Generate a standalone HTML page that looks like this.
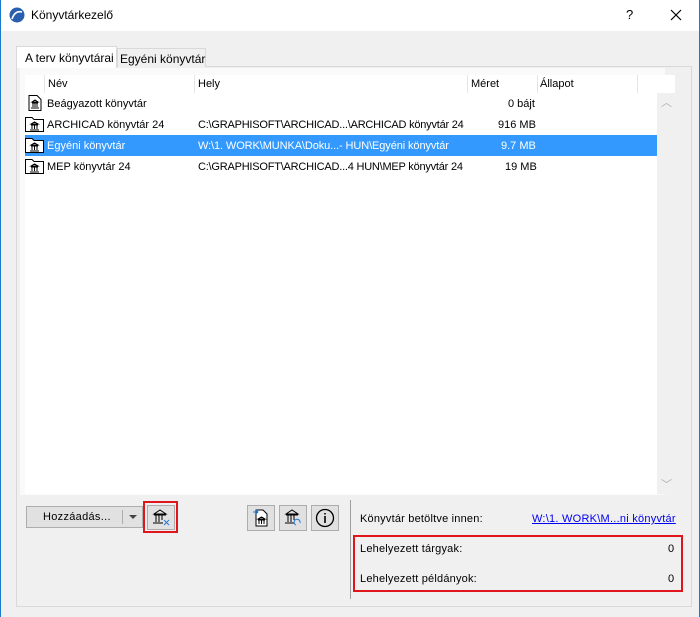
<!DOCTYPE html>
<html><head><meta charset="utf-8"><style>
*{margin:0;padding:0;box-sizing:border-box}
body{width:700px;height:617px;background:#f0f0f0;font-family:"Liberation Sans",sans-serif;font-size:11px;color:#000;position:relative;overflow:hidden}
.a{position:absolute}
.t{position:absolute;white-space:nowrap;line-height:14px}
.btn{position:absolute;background:#e1e1e1;border:1px solid #adadad}
</style></head><body>
<div class="a" style="left:0;top:0;width:700px;height:31px;background:#fff"></div>
<div class="a" style="left:0;top:0;width:1px;height:617px;background:#1979ca"></div>
<div class="a" style="left:699px;top:0;width:1px;height:617px;background:#1979ca"></div>
<svg class="a" style="left:9px;top:7px" width="16" height="16"><circle cx="8" cy="8" r="7.5" fill="#2a5fb0"/><path d="M3 12 Q6 3 13 5" stroke="#fff" stroke-width="1.6" fill="none"/></svg>
<div class="t" style="left:31px;top:8px;font-size:12px">Könyvtárkezelő</div>
<div class="t" style="left:626px;top:8px;font-size:13px">?</div>
<svg class="a" style="left:670px;top:9px" width="12" height="12"><path d="M1 1L11 11M11 1L1 11" stroke="#000" stroke-width="1.2"/></svg>
<div class="a" style="left:16px;top:66px;width:676px;height:541px;border:1px solid #d9d9d9;background:#f0f0f0"></div>
<div class="a" style="left:20px;top:68px;width:645px;height:427px;background:#fafafa"></div>
<div class="a" style="left:16px;top:46px;width:101px;height:22px;background:#fff;border:1px solid #d9d9d9;border-bottom:none"></div>
<div class="t" style="left:25px;top:51px;font-size:12px">A terv könyvtárai</div>
<div class="a" style="left:117px;top:48px;width:89px;height:19px;background:#f0f0f0;border:1px solid #d9d9d9;border-bottom:none"></div>
<div class="t" style="left:120px;top:52px;font-size:12px">Egyéni könyvtár</div>
<div class="a" style="left:25px;top:75px;width:650px;height:419px;background:#fff"></div>
<div class="a" style="left:657px;top:93px;width:18px;height:401px;background:#f0f0f0"></div>
<div class="t" style="left:661px;top:96px;color:#b0b0b0">︿</div>
<div class="t" style="left:661px;top:478px;color:#b0b0b0">﹀</div>
<div class="a" style="left:44px;top:75px;width:1px;height:18px;background:#e5e5e5"></div>
<div class="a" style="left:194px;top:75px;width:1px;height:18px;background:#e5e5e5"></div>
<div class="a" style="left:467px;top:75px;width:1px;height:18px;background:#e5e5e5"></div>
<div class="a" style="left:537px;top:75px;width:1px;height:18px;background:#e5e5e5"></div>
<div class="a" style="left:637px;top:75px;width:1px;height:18px;background:#e5e5e5"></div>
<div class="t" style="left:48px;top:77px">Név</div>
<div class="t" style="left:198px;top:77px">Hely</div>
<div class="t" style="left:471px;top:77px">Méret</div>
<div class="t" style="left:540px;top:77px">Állapot</div>
<div class="a" style="left:25px;top:135px;width:632px;height:21px;background:#3399ff"></div>
<svg class="a" style="left:27px;top:95px" width="16" height="16"><path d="M2 .5H10L14 4.5V15.5H2Z" fill="#fff" stroke="#000"/><path d="M5 7L8 5L11 7ZM5 8H11M6 8V12M8 8V12M10 8V12M4 13H12" stroke="#000" fill="none"/></svg>
<svg class="a" style="left:25px;top:117px" width="19" height="15"><path d="M.5 .5H7L9 2.5H18.5V14.5H.5Z" fill="#fff" stroke="#000"/><path d="M6 7L9.5 5L13 7ZM6 8H13M7 8V12M9.5 8V12M12 8V12M5 13H14" stroke="#000" fill="none"/></svg>
<svg class="a" style="left:25px;top:138px" width="19" height="15"><path d="M.5 .5H7L9 2.5H18.5V14.5H.5Z" fill="#fff" stroke="#000"/><path d="M6 7L9.5 5L13 7ZM6 8H13M7 8V12M9.5 8V12M12 8V12M5 13H14" stroke="#000" fill="none"/></svg>
<svg class="a" style="left:25px;top:159px" width="19" height="15"><path d="M.5 .5H7L9 2.5H18.5V14.5H.5Z" fill="#fff" stroke="#000"/><path d="M6 7L9.5 5L13 7ZM6 8H13M7 8V12M9.5 8V12M12 8V12M5 13H14" stroke="#000" fill="none"/></svg>
<div class="t" style="left:47px;top:97px">Beágyazott könyvtár</div>
<div class="t" style="left:508px;top:97px">0 bájt</div>
<div class="t" style="left:47px;top:118px">ARCHICAD könyvtár 24</div>
<div class="t" style="left:198px;top:118px;letter-spacing:-0.22px">C:\GRAPHISOFT\ARCHICAD...\ARCHICAD könyvtár 24</div>
<div class="t" style="left:498px;top:118px">916 MB</div>
<div class="t" style="left:47px;top:139px;color:#fff">Egyéni könyvtár</div>
<div class="t" style="left:198px;top:139px;color:#fff;letter-spacing:-0.1px">W:\1. WORK\MUNKA\Doku...- HUN\Egyéni könyvtár</div>
<div class="t" style="left:501px;top:139px;color:#fff">9.7 MB</div>
<div class="t" style="left:47px;top:160px">MEP könyvtár 24</div>
<div class="t" style="left:198px;top:160px;letter-spacing:-0.22px">C:\GRAPHISOFT\ARCHICAD...4 HUN\MEP könyvtár 24</div>
<div class="t" style="left:505px;top:160px">19 MB</div>
<div class="btn" style="left:26px;top:506px;width:117px;height:22px"></div>
<div class="t" style="left:43px;top:510px;letter-spacing:0.3px">Hozzáadás...</div>
<div class="a" style="left:122px;top:510px;width:1px;height:14px;background:#adadad"></div>
<div class="a" style="left:129px;top:515px;border-left:4px solid transparent;border-right:4px solid transparent;border-top:4px solid #444"></div>
<div class="a" style="left:143px;top:501px;width:35px;height:32px;border:2px solid #e0161d"></div>
<div class="btn" style="left:147px;top:505px;width:28px;height:25px"></div>
<svg class="a" style="left:152px;top:509px" width="18" height="17"><path d="M2 5L8 1L14 5ZM2 6H14M4 6V13M7 6V13M10 6V11M1 14H11" stroke="#000" fill="none"/><path d="M12 11L17 16M17 11L12 16" stroke="#2a7ad8"/></svg>
<div class="btn" style="left:247px;top:505px;width:28px;height:26px"></div>
<svg class="a" style="left:251px;top:508px" width="20" height="20"><path d="M5 2H12L16 6V18H5Z" fill="#fff" stroke="#000"/><path d="M2 4H7M5 2L7 4L5 6" stroke="#2a7ad8" fill="none"/><path d="M7 11L10.5 9L14 11ZM7 12H14M8 12V16M10.5 12V16M13 12V16" stroke="#000" fill="none"/></svg>
<div class="btn" style="left:279px;top:505px;width:28px;height:26px"></div>
<svg class="a" style="left:284px;top:509px" width="18" height="18"><path d="M2 5L8 1L14 5ZM2 6H14M4 6V13M7 6V13M10 6V11M1 14H10" stroke="#000" fill="none"/><path d="M12 16A3 3 0 1 1 16 14" stroke="#2a7ad8" fill="none"/></svg>
<div class="btn" style="left:311px;top:505px;width:28px;height:26px"></div>
<svg class="a" style="left:315px;top:508px" width="20" height="20"><circle cx="10" cy="10" r="8.5" fill="none" stroke="#000" stroke-width="1.3"/><path d="M10 8V15M10 5V6.5" stroke="#000" stroke-width="1.6"/></svg>
<div class="a" style="left:350px;top:500px;width:1px;height:99px;background:#a0a0a0"></div>
<div class="t" style="left:360px;top:512px;letter-spacing:0.2px">Könyvtár betöltve innen:</div>
<div class="t" style="left:532px;top:512px;color:#0000ee;text-decoration:underline;letter-spacing:0.25px">W:\1. WORK\M...ni könyvtár</div>
<div class="a" style="left:353px;top:535px;width:330px;height:57px;border:2px solid #e0161d"></div>
<div class="t" style="left:360px;top:542px;letter-spacing:0.2px">Lehelyezett tárgyak:</div>
<div class="t" style="left:668px;top:542px">0</div>
<div class="t" style="left:360px;top:572px;letter-spacing:0.2px">Lehelyezett példányok:</div>
<div class="t" style="left:668px;top:572px">0</div>
</body></html>
